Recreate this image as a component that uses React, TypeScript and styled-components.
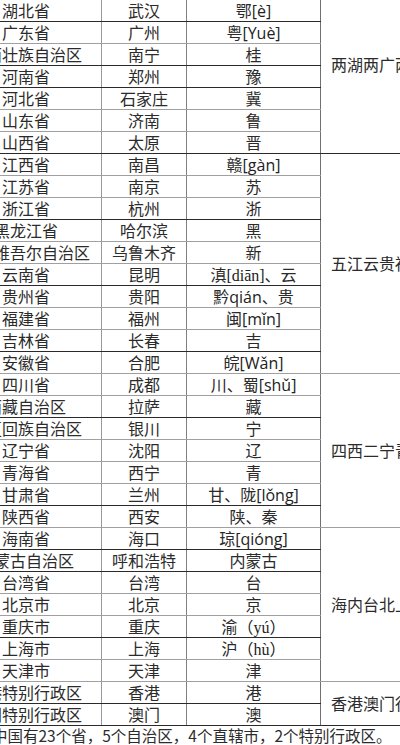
import React from "react";
import styled, { createGlobalStyle } from "styled-components";

const GlobalStyle = createGlobalStyle`
  html, body {
    margin: 0;
    padding: 0;
    background: #ffffff;
    overflow: hidden;
    width: 400px;
    height: 745px;
  }
  body {
    font-family: "Noto Sans CJK SC", "Liberation Serif", serif;
    color: #2a2a2a;
  }
`;

const Page = styled.div`
  width: 400px;
  height: 745px;
  overflow: hidden;
  display: flex;
  flex-direction: column;
`;

const Sheet = styled.table`
  border-collapse: collapse;
  table-layout: fixed;
  width: 537px;
  margin: -23px 0 0 -49px;
  font-size: 16px;
  flex: none;
`;

const Row = styled.tr`
  height: 22px;
`;

const Cell = styled.td<{ $line: string; $w: number; $right: string }>`
  width: ${(p) => p.$w}px;
  padding: 0;
  text-align: center;
  border-bottom: 1px solid ${(p) => p.$line};
  border-right: 1px solid ${(p) => p.$right};
  color: #2b2b2b;
`;

const CellText = styled.div`
  height: 21px;
  line-height: 21px;
  white-space: nowrap;
`;

const GroupCell = styled.td<{ $line: string }>`
  padding: 0 0 0 10px;
  text-align: left;
  vertical-align: middle;
  white-space: nowrap;
  line-height: 21px;
  border-bottom: 1px solid ${(p) => p.$line};
  color: #2b2b2b;
`;

const Py = styled.span<{ $kind: "sans" | "serif" }>`
  font-family: ${(p) =>
    p.$kind === "sans"
      ? '"Open Sans", "Liberation Sans", sans-serif'
      : '"Liberation Serif", "Noto Sans CJK SC", serif'};
  font-size: 16px;
  line-height: 1;
  color: #222;
`;

const Footer = styled.div`
  margin: 0 0 0 -8px;
  height: 19px;
  line-height: 19px;
  font-size: 15.5px;
  white-space: nowrap;
  color: #2b2b2b;
  flex: none;
`;

type Abbr = React.ReactNode;
type Item = { p: string; c: string; a: Abbr; line: string };
type Group = { label: string; line: string; items: Item[] };

const D = "#2a2a2a";
const G = "#a0a0a0";

const groups: Group[] = [
  {
    label: "两湖两广两河山五省",
    line: D,
    items: [
      { p: "湖南省", c: "长沙", a: "湘", line: D },
      { p: "湖北省", c: "武汉", a: <>鄂<Py $kind="sans">[è]</Py></>, line: D },
      { p: "广东省", c: "广州", a: <>粤<Py $kind="sans">[Yuè]</Py></>, line: G },
      { p: "广西壮族自治区", c: "南宁", a: "桂", line: D },
      { p: "河南省", c: "郑州", a: "豫", line: D },
      { p: "河北省", c: "石家庄", a: "冀", line: G },
      { p: "山东省", c: "济南", a: "鲁", line: G },
      { p: "山西省", c: "太原", a: "晋", line: D },
    ],
  },
  {
    label: "五江云贵福吉安",
    line: G,
    items: [
      { p: "江西省", c: "南昌", a: <>赣<Py $kind="sans">[gàn]</Py></>, line: G },
      { p: "江苏省", c: "南京", a: "苏", line: G },
      { p: "浙江省", c: "杭州", a: "浙", line: D },
      { p: "黑龙江省", c: "哈尔滨", a: "黑", line: G },
      { p: "新疆维吾尔自治区", c: "乌鲁木齐", a: "新", line: G },
      { p: "云南省", c: "昆明", a: <>滇<Py $kind="serif">[diān]</Py>、云</>, line: D },
      { p: "贵州省", c: "贵阳", a: <>黔<Py $kind="sans">qián</Py>、贵</>, line: G },
      { p: "福建省", c: "福州", a: <>闽<Py $kind="sans">[mǐn]</Py></>, line: G },
      { p: "吉林省", c: "长春", a: "吉", line: D },
      { p: "安徽省", c: "合肥", a: <>皖<Py $kind="sans">[Wǎn]</Py></>, line: G },
    ],
  },
  {
    label: "四西二宁青甘陕",
    line: G,
    items: [
      { p: "四川省", c: "成都", a: <>川、蜀<Py $kind="sans">[shǔ]</Py></>, line: G },
      { p: "西藏自治区", c: "拉萨", a: "藏", line: D },
      { p: "宁夏回族自治区", c: "银川", a: "宁", line: G },
      { p: "辽宁省", c: "沈阳", a: "辽", line: G },
      { p: "青海省", c: "西宁", a: "青", line: G },
      { p: "甘肃省", c: "兰州", a: <>甘、陇<Py $kind="sans">[lǒng]</Py></>, line: D },
      { p: "陕西省", c: "西安", a: "陕、秦", line: G },
    ],
  },
  {
    label: "海内台北上重天",
    line: G,
    items: [
      { p: "海南省", c: "海口", a: <>琼<Py $kind="sans">[qióng]</Py></>, line: D },
      { p: "内蒙古自治区", c: "呼和浩特", a: "内蒙古", line: D },
      { p: "台湾省", c: "台湾", a: "台", line: G },
      { p: "北京市", c: "北京", a: "京", line: G },
      { p: "重庆市", c: "重庆", a: <>渝<Py $kind="serif">（yú）</Py></>, line: D },
      { p: "上海市", c: "上海", a: <>沪<Py $kind="serif">（hù）</Py></>, line: G },
      { p: "天津市", c: "天津", a: "津", line: G },
    ],
  },
  {
    label: "香港澳门行政区",
    line: D,
    items: [
      { p: "香港特别行政区", c: "香港", a: "港", line: D },
      { p: "澳门特别行政区", c: "澳门", a: "澳", line: D },
    ],
  },
];

export default function App() {
  return (
    <Page>
      <GlobalStyle />
      <Sheet>
        <tbody>
          {groups.map((g) =>
            g.items.map((it, i) => (
              <Row key={it.p}>
                <Cell $line={it.line} $w={150} $right="#9a9a9a">
                  <CellText>{it.p}</CellText>
                </Cell>
                <Cell $line={it.line} $w={84} $right="#808080">
                  <CellText>{it.c}</CellText>
                </Cell>
                <Cell $line={it.line} $w={133} $right="#707070">
                  <CellText>{it.a}</CellText>
                </Cell>
                {i === 0 && (
                  <GroupCell rowSpan={g.items.length} $line={g.line}>
                    {g.label}
                  </GroupCell>
                )}
              </Row>
            ))
          )}
        </tbody>
      </Sheet>
      <Footer>中国有23个省，5个自治区，4个直辖市，2个特别行政区。</Footer>
    </Page>
  );
}
